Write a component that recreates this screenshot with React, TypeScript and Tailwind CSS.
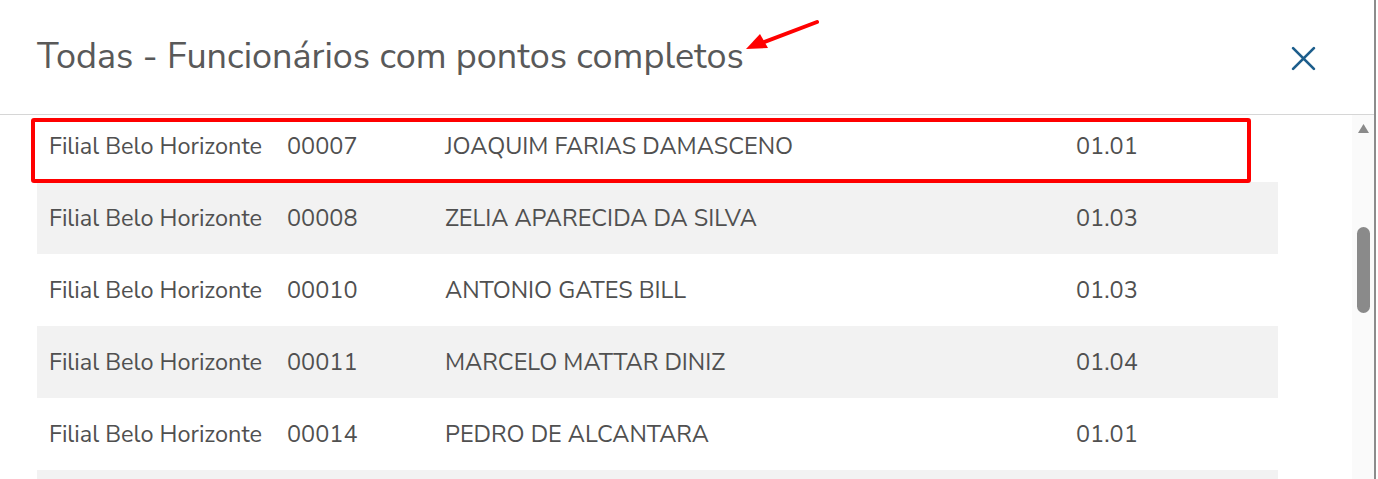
import React from "react";

const rows = [
  { filial: "Filial Belo Horizonte", code: "00007", name: "JOAQUIM FARIAS DAMASCENO", dept: "01.01" },
  { filial: "Filial Belo Horizonte", code: "00008", name: "ZELIA APARECIDA DA SILVA", dept: "01.03" },
  { filial: "Filial Belo Horizonte", code: "00010", name: "ANTONIO GATES BILL", dept: "01.03" },
  { filial: "Filial Belo Horizonte", code: "00011", name: "MARCELO MATTAR DINIZ", dept: "01.04" },
  { filial: "Filial Belo Horizonte", code: "00014", name: "PEDRO DE ALCANTARA", dept: "01.01" },
  { filial: "", code: "00015", name: "", dept: "" },
];

export default function App() {
  return (
    <div className="relative w-[1378px] h-[479px] overflow-hidden bg-white font-['Nunito_Sans','Open_Sans',sans-serif] text-[#555555]">
      <div className="flex flex-col h-full w-[1376px] border-r-2 border-[#8c8c8c]">
        {/* Header */}
        <div className="flex items-center justify-between h-[115px] shrink-0 border-b border-[#d6d6d6] pl-[37px] pr-[58px]">
          <h2 className="text-[36px] leading-none text-[#595959] pb-[1px]">
            Todas - Funcionários com pontos completos
          </h2>
          <button className="text-[#1d5e8c] pt-[2px]">
            <svg width="25" height="25" viewBox="0 0 24 24" fill="none" stroke="currentColor" strokeWidth="2.6" strokeLinecap="round">
              <path d="M2 2L22 22M22 2L2 22" />
            </svg>
          </button>
        </div>

        {/* Body */}
        <div className="flex flex-1 min-h-0">
          <div className="flex-1 overflow-hidden pl-[37px]">
            <div className="-mt-[5px] w-[1241px]">
              {rows.map((r, i) => (
                <div
                  key={r.code}
                  className={`flex items-center h-[72px] pl-[12px] pt-[2px] text-[23.5px] text-[#505050] ${i % 2 === 1 ? "bg-[#f2f2f2]" : "bg-white"}`}
                >
                  <span className="w-[238px] shrink-0">{r.filial}</span>
                  <span className="w-[158px] shrink-0">{r.filial ? r.code : ""}</span>
                  <span className="w-[631px] shrink-0">{r.name}</span>
                  <span>{r.dept}</span>
                </div>
              ))}
            </div>
          </div>

          {/* Scrollbar */}
          <div className="w-[22px] shrink-0 bg-[#fafafa] flex flex-col items-center pt-[9px]">
            <svg width="11" height="9" viewBox="0 0 11 9">
              <path d="M5.5 0L11 9H0Z" fill="#8a8a8a" />
            </svg>
            <div className="mt-[94px] w-[13px] h-[86px] rounded-full bg-[#8a8a8a]" />
          </div>
        </div>
      </div>

      {/* Annotation: highlight box */}
      <div className="absolute left-[31px] top-[118px] w-[1220px] h-[65px] border-4 border-[#ff0000] rounded-[3px]" />

      {/* Annotation: arrow */}
      <svg className="absolute left-[740px] top-[16px]" width="85" height="40" viewBox="0 0 85 40">
        <path d="M77 6L22 27" stroke="#ff0000" strokeWidth="4" strokeLinecap="round" />
        <path d="M6 33L20 18L28 32Z" fill="#ff0000" />
      </svg>
    </div>
  );
}
